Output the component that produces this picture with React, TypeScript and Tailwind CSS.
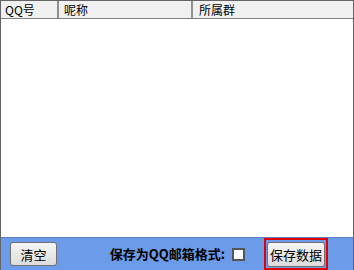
export default function App() {
  const font = { fontFamily: '"SimSun", "Noto Sans CJK SC", sans-serif' };
  return (
    <div
      className="w-[354px] h-[270px] flex flex-col bg-white border-x border-t border-[#646464] text-black overflow-hidden"
      style={font}
    >
      {/* list header */}
      <div className="h-[18px] flex bg-[#f0f0f0] border-b border-[#808080] text-[12px] leading-[17px]">
        <div className="w-[58px] pl-[4px] border-r-2 border-[#909090]">QQ号</div>
        <div className="w-[134px] pl-[5px] border-r-2 border-[#909090]">呢称</div>
        <div className="flex-1 pl-[6px]">所属群</div>
      </div>

      {/* list body */}
      <div className="flex-1 bg-white" />

      {/* bottom bar */}
      <div className="h-[33px] flex items-center bg-[#6b9be9] border-t border-[#5a7ec0] pl-[9px] pr-[25px]">
        <button className="w-[47px] h-[24px] rounded-[3px] border border-[#707070] bg-gradient-to-b from-[#f6f6f6] to-[#dcdcdc] text-[13px] leading-none">
          清空
        </button>
        <span className="ml-auto text-[13px] font-bold">保存为QQ邮箱格式:</span>
        <span className="ml-[7px] w-[13px] h-[13px] bg-white border-2 border-[#555]" />
        <div className="ml-[19px] border-2 border-[#e00000] p-px">
          <button className="w-[58px] h-[25px] rounded-[3px] border border-[#707070] bg-gradient-to-b from-[#f6f6f6] to-[#dcdcdc] text-[13px] leading-none">
            保存数据
          </button>
        </div>
      </div>
    </div>
  );
}
